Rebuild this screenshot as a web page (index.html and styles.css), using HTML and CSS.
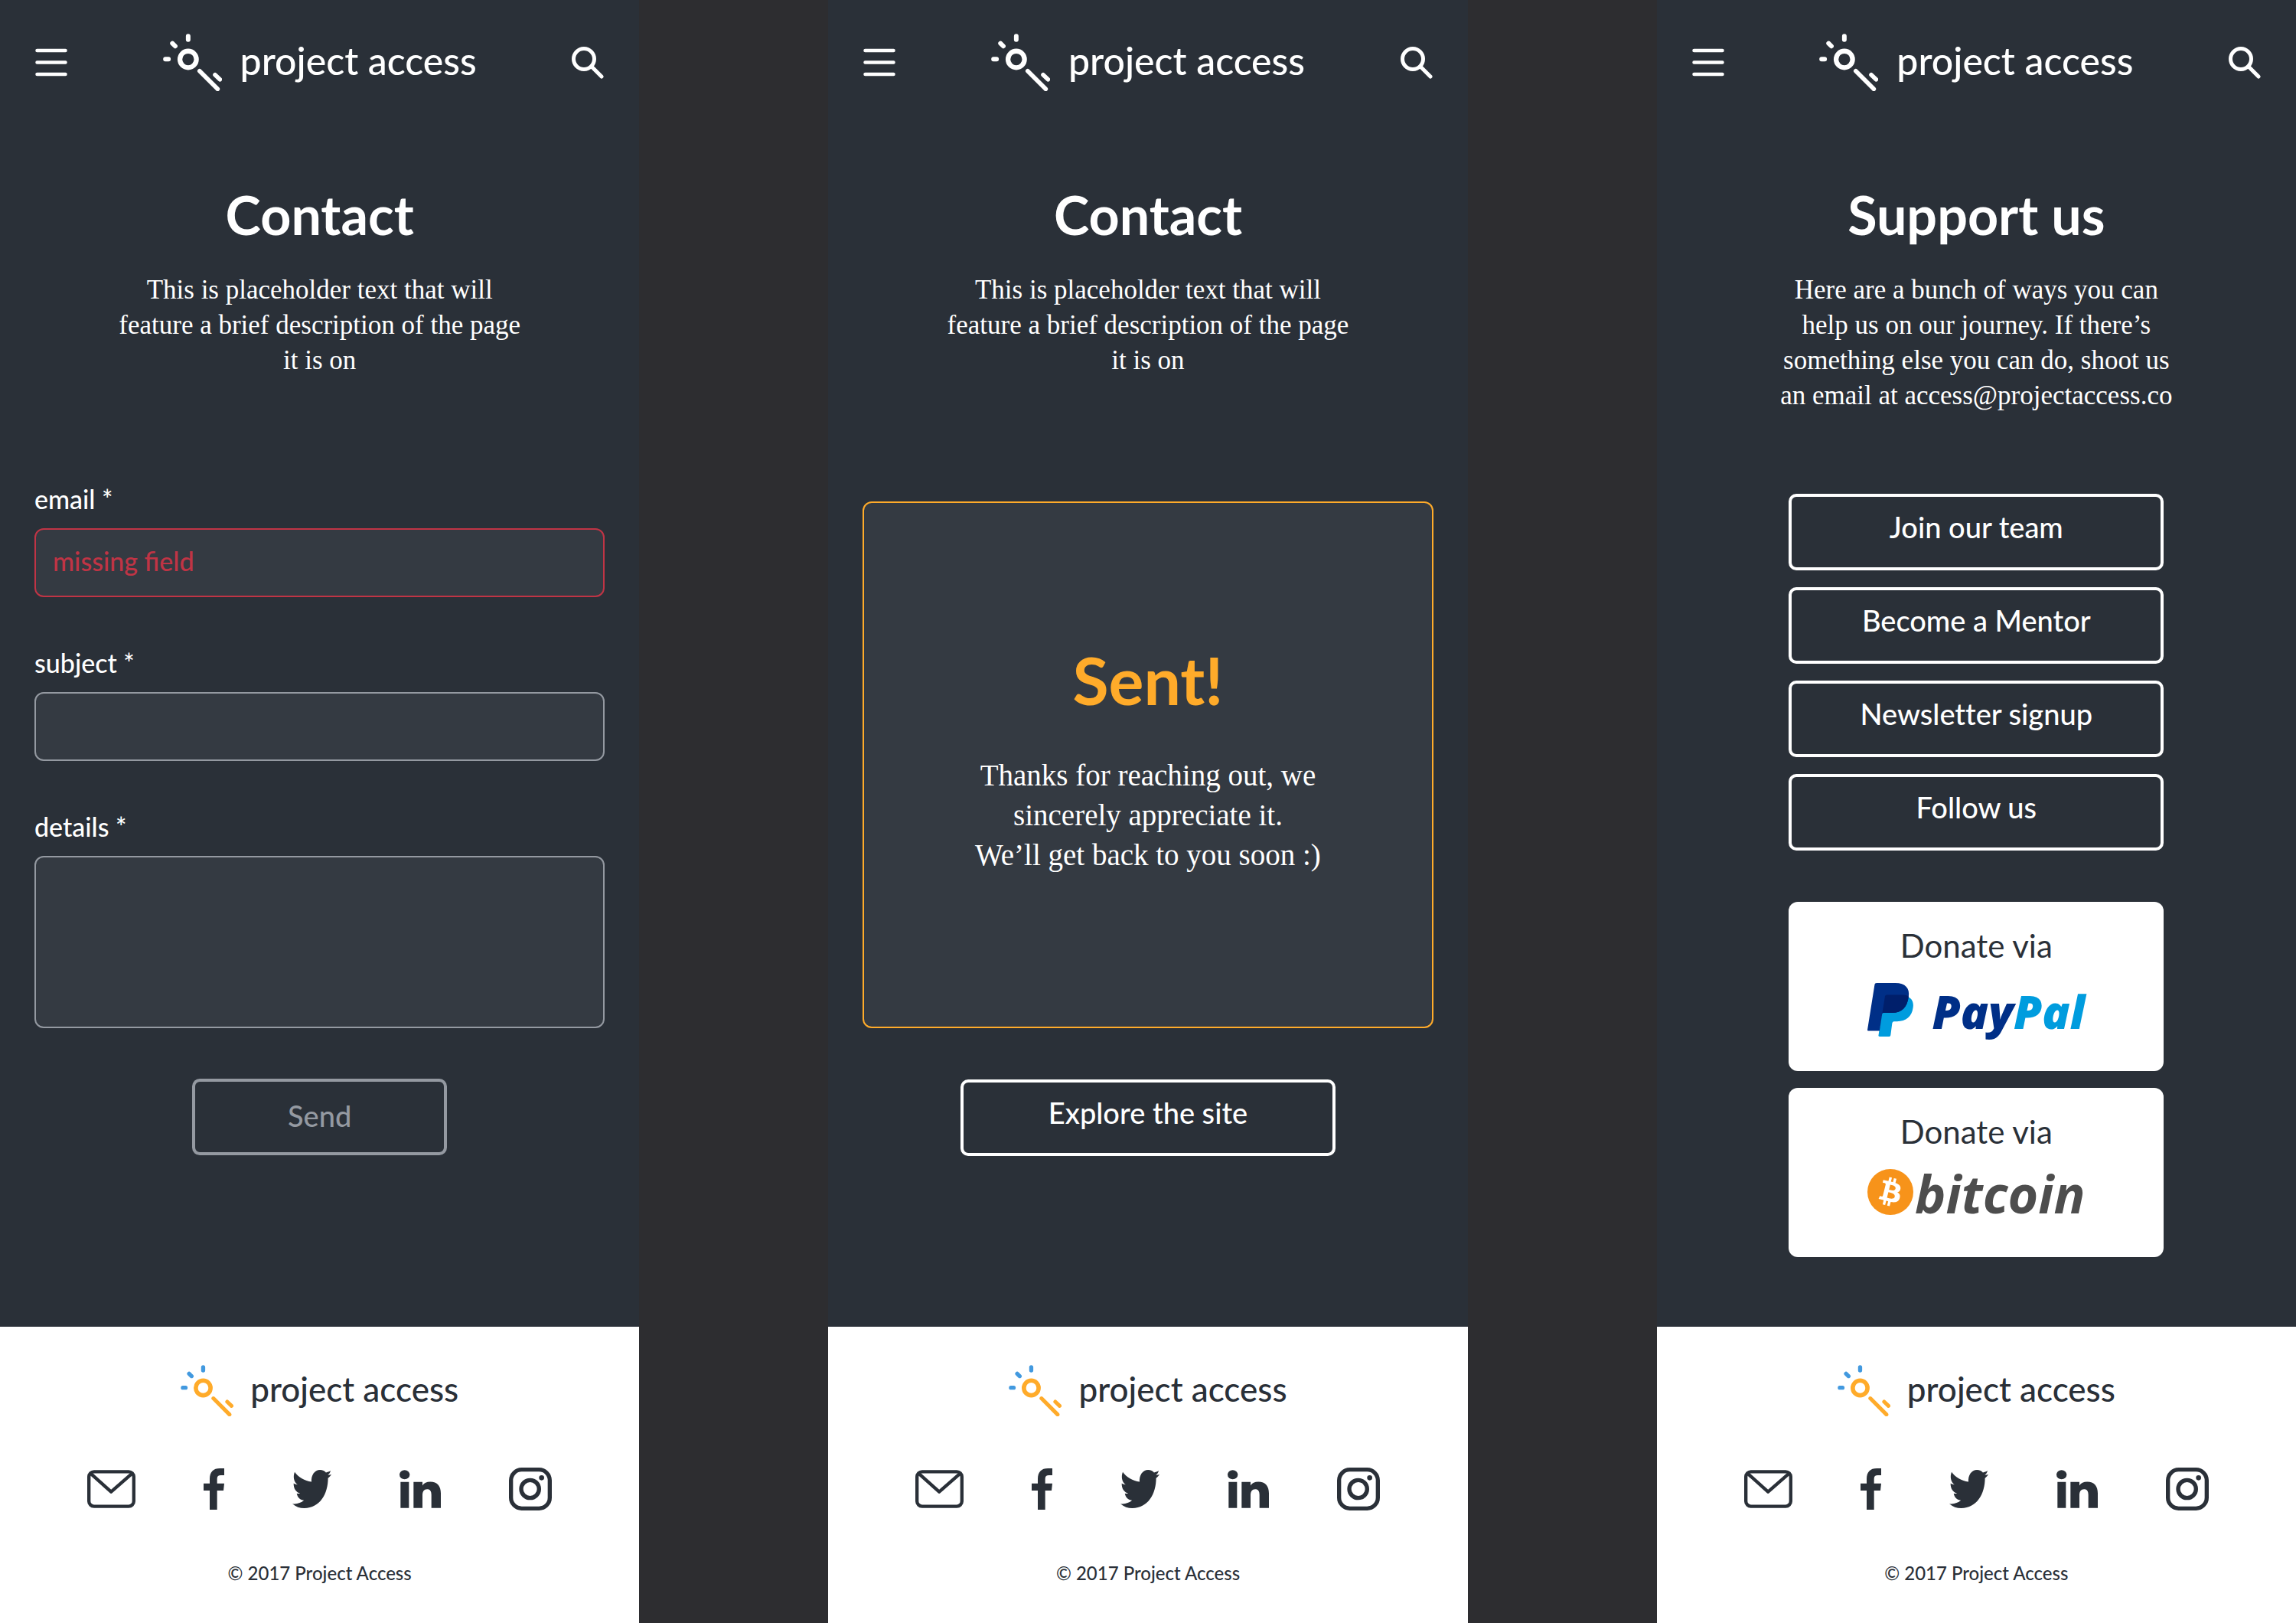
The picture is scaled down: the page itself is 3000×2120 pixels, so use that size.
FILE: index.html
```html
<!DOCTYPE html>
<html lang="en">
<head>
  <meta charset="utf-8">
  <meta name="viewport" content="width=device-width, initial-scale=1">
  <title>Project Access</title>
  <link rel="stylesheet" href="styles.css">
</head>
<body>
  <!-- Shared icons -->
  <svg class="sprite" aria-hidden="true">
    <symbol id="key" viewBox="66 42 232 226">
      <g fill="none" stroke-linecap="round">
        <g class="key-rays" stroke-width="18">
          <path d="M165 51.500V65.500M75.500 142H87.500M103 80L114 91"/>
        </g>
        <g class="key-body" stroke-width="17">
          <circle cx="165" cy="143" r="32.500" stroke-width="19"/>
          <path d="M210 189L281 260M271 204L290 222"/>
        </g>
      </g>
    </symbol>
    <symbol id="menu" viewBox="0 0 42 42">
      <path d="M2.500 5H39.500M2.500 20.500H39.500M2.500 36H39.500" fill="none" stroke="currentColor" stroke-width="4.500" stroke-linecap="round"/>
    </symbol>
    <symbol id="search" viewBox="0 0 42 42">
      <g fill="none" stroke="currentColor" stroke-linecap="round">
        <circle cx="16" cy="16" r="13.500" stroke-width="5"/>
        <path d="M27 27L39 39" stroke-width="5"/>
      </g>
    </symbol>
    <symbol id="mail" viewBox="108 59 188 148">
      <g fill="none" stroke="currentColor" stroke-width="13" stroke-linejoin="round">
        <rect x="114.500" y="65.500" width="175" height="135" rx="20"/>
        <path d="M121 72L201 144L283 72"/>
      </g>
    </symbol>
    <symbol id="facebook" viewBox="562 52 81 162">
      <path fill="currentColor" d="M586 214V139H562V111H586V94C586 66 600 52 626 52H643V79H630C620 79 615 83 615 93V111H643L640 139H615V214Z"/>
    </symbol>
    <symbol id="twitter" viewBox="912 59 151 148">
      <path fill="currentColor" d="M921 67C935 87 960 101 986 105C984 80 998 59 1019 59C1029 59 1037 63 1042 69C1048 68 1054 66 1060 62C1058 70 1054 76 1049 79C1054 79 1059 78 1063 77C1060 82 1055 88 1050 91C1050 150 1020 207 958 207C941 207 925 202 912 190C928 193 945 187 957 177C943 176 932 166 929 150C934 151 938 151 942 150C926 146 916 130 917 111C921 114 927 116 932 116C917 105 914 84 921 67Z"/>
    </symbol>
    <symbol id="linkedin" viewBox="251 58 162 149">
      <g fill="currentColor">
        <ellipse cx="271" cy="76.500" rx="20" ry="18"/>
        <path d="M255 105H288V207H255ZM306 105H341V119C347 109 357 104 372 104C399 104 413 121 413 149V207H376V156C376 141 371 133 359 133C347 133 341 142 341 156V207H306Z"/>
      </g>
    </symbol>
    <symbol id="instagram" viewBox="680 52 168 168">
      <g fill="none" stroke="currentColor" stroke-width="16">
        <rect x="688" y="60" width="152" height="152" rx="42"/>
        <circle cx="763" cy="136" r="35"/>
      </g>
      <circle cx="808" cy="92" r="10" fill="currentColor"/>
    </symbol>
  </svg>

  <div class="screens">
    <section class="screen">
      <header class="topbar">
        <button class="icon-button" type="button" aria-label="Menu"><svg><use href="#menu"/></svg></button>
        <a class="logo" href="#"><svg class="logo-key"><use href="#key"/></svg><span class="logo-name">project access</span></a>
        <button class="icon-button" type="button" aria-label="Search"><svg><use href="#search"/></svg></button>
      </header>
      <main class="content">
        <h1 class="title">Contact</h1>
        <p class="intro">This is placeholder text that will feature a brief description of the page it is on</p>
        <form class="form">
          <div class="field">
            <label for="email">email *</label>
            <input class="input input-error" id="email" type="email" placeholder="missing field">
          </div>
          <div class="field">
            <label for="subject">subject *</label>
            <input class="input" id="subject" type="text">
          </div>
          <div class="field">
            <label for="details">details *</label>
            <textarea class="input input-tall" id="details"></textarea>
          </div>
          <button class="button button-send" type="submit" disabled>Send</button>
        </form>
      </main>
      <footer class="footer">
        <a class="logo logo-small" href="#"><svg class="logo-key"><use href="#key"/></svg><span class="logo-name">project access</span></a>
        <nav class="social" aria-label="Social">
          <a href="#" aria-label="Email"><svg class="i-mail"><use href="#mail"/></svg></a>
          <a href="#" aria-label="Facebook"><svg class="i-facebook"><use href="#facebook"/></svg></a>
          <a href="#" aria-label="Twitter"><svg class="i-twitter"><use href="#twitter"/></svg></a>
          <a href="#" aria-label="LinkedIn"><svg class="i-linkedin"><use href="#linkedin"/></svg></a>
          <a href="#" aria-label="Instagram"><svg class="i-instagram"><use href="#instagram"/></svg></a>
        </nav>
        <p class="copyright">© 2017 Project Access</p>
      </footer>
    </section>

    <section class="screen">
      <header class="topbar">
        <button class="icon-button" type="button" aria-label="Menu"><svg><use href="#menu"/></svg></button>
        <a class="logo" href="#"><svg class="logo-key"><use href="#key"/></svg><span class="logo-name">project access</span></a>
        <button class="icon-button" type="button" aria-label="Search"><svg><use href="#search"/></svg></button>
      </header>
      <main class="content">
        <h1 class="title">Contact</h1>
        <p class="intro">This is placeholder text that will feature a brief description of the page it is on</p>
        <div class="sent">
          <h2 class="sent-title">Sent!</h2>
          <p class="sent-text">Thanks for reaching out, we sincerely appreciate it.<br>We’ll get back to you soon :)</p>
        </div>
        <a class="button button-wide" href="#">Explore the site</a>
      </main>
      <footer class="footer">
        <a class="logo logo-small" href="#"><svg class="logo-key"><use href="#key"/></svg><span class="logo-name">project access</span></a>
        <nav class="social" aria-label="Social">
          <a href="#" aria-label="Email"><svg class="i-mail"><use href="#mail"/></svg></a>
          <a href="#" aria-label="Facebook"><svg class="i-facebook"><use href="#facebook"/></svg></a>
          <a href="#" aria-label="Twitter"><svg class="i-twitter"><use href="#twitter"/></svg></a>
          <a href="#" aria-label="LinkedIn"><svg class="i-linkedin"><use href="#linkedin"/></svg></a>
          <a href="#" aria-label="Instagram"><svg class="i-instagram"><use href="#instagram"/></svg></a>
        </nav>
        <p class="copyright">© 2017 Project Access</p>
      </footer>
    </section>

    <section class="screen">
      <header class="topbar">
        <button class="icon-button" type="button" aria-label="Menu"><svg><use href="#menu"/></svg></button>
        <a class="logo" href="#"><svg class="logo-key"><use href="#key"/></svg><span class="logo-name">project access</span></a>
        <button class="icon-button" type="button" aria-label="Search"><svg><use href="#search"/></svg></button>
      </header>
      <main class="content">
        <h1 class="title">Support us</h1>
        <p class="intro">Here are a bunch of ways you can help us on our journey. If there’s something else you can do, shoot us an email at access@projectaccess.co</p>
        <div class="actions">
          <a class="button button-wide" href="#">Join our team</a>
          <a class="button button-wide" href="#">Become a Mentor</a>
          <a class="button button-wide" href="#">Newsletter signup</a>
          <a class="button button-wide" href="#">Follow us</a>
        </div>
        <div class="donations">
          <a class="donate" href="#">
            <span>Donate via</span>
            <span class="brand paypal">
              <svg class="paypal-mark" viewBox="360 374 178 208" aria-hidden="true">
                <path fill="#009cde" d="M519 428C534 436 540 450 537 470C532 505 510 523 475 523H463C459 523 457 526 456 530L450 576C449 580 447 582 443 582H407C404 582 402 580 403 577L407 550L417 480Z"/>
                <path fill="#002f87" d="M388 380C389 376 391 374 396 374H468C508 374 525 395 520 427C514 470 494 490 455 490H424C420 490 418 491 417 494L407 560H364C361 560 360 558 360 555Z"/>
                <path fill="#001f6b" d="M428 426C429 422 431 420 436 420H500C508 420 514 422 520 427C514 470 494 490 455 490H424C420 490 418 491 417 494Z"/>
              </svg>
              <span>Pay<span class="paypal-light">Pal</span></span>
            </span>
          </a>
          <a class="donate" href="#">
            <span>Donate via</span>
            <span class="brand bitcoin">
              <svg class="bitcoin-mark" viewBox="0 0 64 64" aria-hidden="true">
                <circle cx="32" cy="32" r="32" fill="#f7931a"/>
                <path fill="#fff" d="M46.110 27.441c.636-4.258-2.606-6.547-7.039-8.074l1.438-5.768-3.512-.875-1.400 5.616c-.922-.230-1.870-.447-2.812-.662l1.410-5.653-3.509-.875-1.439 5.766c-.764-.174-1.514-.346-2.242-.527l.004-.018-4.842-1.209-.934 3.750s2.605.597 2.550.634c1.422.355 1.680 1.296 1.636 2.042l-1.638 6.571c.098.025.225.061.365.117l-.370-.092-2.297 9.205c-.174.432-.615 1.080-1.609.834.035.051-2.552-.637-2.552-.637l-1.743 4.020 4.570 1.139c.850.213 1.683.436 2.502.646l-1.453 5.835 3.507.875 1.440-5.772c.957.260 1.887.500 2.797.726L27.504 50.800l3.511.875 1.453-5.823c5.987 1.133 10.490.676 12.383-4.738 1.527-4.360-.075-6.875-3.225-8.516 2.294-.531 4.022-2.040 4.483-5.157zM38.087 38.690c-1.086 4.360-8.426 2.004-10.807 1.412l1.928-7.729c2.380.594 10.011 1.770 8.880 6.317zm1.085-11.312c-.990 3.966-7.100 1.951-9.083 1.457l1.748-7.010c1.983.494 8.367 1.416 7.335 5.553z"/>
              </svg>
              <span>bitcoin</span>
            </span>
          </a>
        </div>
      </main>
      <footer class="footer">
        <a class="logo logo-small" href="#"><svg class="logo-key"><use href="#key"/></svg><span class="logo-name">project access</span></a>
        <nav class="social" aria-label="Social">
          <a href="#" aria-label="Email"><svg class="i-mail"><use href="#mail"/></svg></a>
          <a href="#" aria-label="Facebook"><svg class="i-facebook"><use href="#facebook"/></svg></a>
          <a href="#" aria-label="Twitter"><svg class="i-twitter"><use href="#twitter"/></svg></a>
          <a href="#" aria-label="LinkedIn"><svg class="i-linkedin"><use href="#linkedin"/></svg></a>
          <a href="#" aria-label="Instagram"><svg class="i-instagram"><use href="#instagram"/></svg></a>
        </nav>
        <p class="copyright">© 2017 Project Access</p>
      </footer>
    </section>
  </div>
</body>
</html>
```
FILE: styles.css
```css
:root {
  --ink: #2a3038;
  --panel: #343a42;
  --muted: #9499a1;
  --orange: #ffab2a;
  --blue: #4299df;
  --red: #c03445;
}

* {
  box-sizing: border-box;
}

body {
  margin: 0;
  background: #2d2d30;
  color: #fff;
  font-family: Lato, "Open Sans", sans-serif;
  font-weight: 500;
}

h1, h2, p {
  margin: 0;
}

a {
  color: inherit;
  text-decoration: none;
}

svg {
  display: block;
}

.sprite {
  display: none;
}

.screens {
  display: grid;
  grid-template-columns: repeat(3, 1fr);
  column-gap: 247px;
  min-height: 100vh;
}

.screen {
  display: flex;
  flex-direction: column;
  background: var(--ink);
}

/* Top bar */

.topbar {
  display: flex;
  align-items: center;
  justify-content: space-between;
  padding: 44px 46px;
}

.icon-button {
  padding: 0;
  border: 0;
  background: none;
  color: inherit;
}

.icon-button svg {
  width: 42px;
  height: 42px;
}

.logo {
  display: flex;
  align-items: center;
  gap: 24px;
  font-size: 50px;
  line-height: 60px;
}

.logo-key {
  width: 77px;
  height: 75px;
}

.logo-name {
  padding-bottom: 6px;
}

.key-rays {
  stroke: var(--rays, #fff);
}

.key-body {
  stroke: var(--key, #fff);
}

/* Page content */

.content {
  flex: 1;
  display: flex;
  flex-direction: column;
  align-items: center;
  padding: 75px 45px 91px;
}

.title {
  font-size: 70px;
  font-weight: 700;
  line-height: 84px;
}

.intro {
  max-width: 530px;
  margin-top: 34px;
  font-family: "Liberation Serif", serif;
  font-size: 35px;
  font-weight: 400;
  line-height: 46px;
  text-align: center;
}

/* Form */

.form {
  display: flex;
  flex-direction: column;
  gap: 66px;
  width: 100%;
  margin-top: 138px;
}

.field {
  display: flex;
  flex-direction: column;
  gap: 18px;
  font-size: 34px;
  line-height: 40px;
}

.input {
  height: 90px;
  padding: 0 22px 6px;
  border: 2px solid var(--muted);
  border-radius: 12px;
  background: var(--panel);
  color: #fff;
  font: inherit;
}

.input-tall {
  height: 225px;
  padding: 20px 22px;
  resize: none;
}

.input-error {
  border-color: var(--red);
}

.input::placeholder {
  color: var(--red);
  opacity: 1;
}

/* Buttons */

.button {
  display: flex;
  align-items: center;
  justify-content: center;
  height: 100px;
  padding: 0 20px 14px;
  border: 4px solid currentColor;
  border-radius: 10px;
  background: none;
  color: #fff;
  font: 500 38px/46px Lato, "Open Sans", sans-serif;
  font-variant-ligatures: none;
}

.button-wide {
  width: 490px;
  max-width: 100%;
}

.button-send {
  align-self: center;
  width: 333px;
  padding-bottom: 4px;
  color: var(--muted);
}

/* Confirmation */

.sent {
  display: flex;
  flex-direction: column;
  align-items: center;
  gap: 47px;
  width: 100%;
  margin: 161px 0 67px;
  padding: 179px 20px 198px;
  border: 2px solid var(--orange);
  border-radius: 12px;
  background: var(--panel);
}

.sent-title {
  color: var(--orange);
  font-size: 86px;
  font-weight: 700;
  line-height: 104px;
}

.sent-text {
  max-width: 480px;
  font-family: "Liberation Serif", serif;
  font-size: 39px;
  font-weight: 400;
  line-height: 52px;
  text-align: center;
}

/* Support */

.actions,
.donations {
  display: flex;
  flex-direction: column;
  gap: 22px;
}

.actions {
  margin: 105px 0 67px;
}

.donate {
  display: flex;
  flex-direction: column;
  align-items: center;
  gap: 24px;
  width: 490px;
  height: 221px;
  padding-top: 32px;
  border-radius: 12px;
  background: #fff;
  color: var(--ink);
  font-size: 42px;
  font-weight: 400;
  line-height: 50px;
}

.brand {
  display: flex;
  align-items: flex-start;
  font-family: "Open Sans", sans-serif;
  font-style: italic;
}

.paypal {
  gap: 24px;
  color: #002f87;
  font-size: 60px;
  font-weight: 800;
  line-height: 74px;
}

.paypal-light {
  color: #009cde;
}

.paypal-mark {
  width: 60px;
  height: 70px;
}

.bitcoin {
  gap: 2px;
  color: #4d4d4d;
  font-size: 68px;
  font-weight: 700;
  line-height: 64px;
}

.bitcoin-mark {
  width: 60px;
  height: 60px;
}

/* Footer */

.footer {
  --rays: var(--blue);
  --key: var(--orange);
  display: flex;
  flex-direction: column;
  align-items: center;
  gap: 67px;
  padding: 50px 20px;
  background: #fff;
  color: var(--ink);
}

.logo-small {
  gap: 22px;
  font-size: 44px;
  line-height: 54px;
}

.logo-small .logo-key {
  width: 69px;
  height: 67px;
}

.social {
  display: flex;
  align-items: center;
  gap: 89px;
}

.i-mail {
  width: 63px;
  height: 50px;
}

.i-facebook {
  width: 27px;
  height: 54px;
}

.i-twitter {
  width: 51px;
  height: 50px;
}

.i-linkedin {
  width: 54px;
  height: 50px;
}

.i-instagram {
  width: 56px;
  height: 56px;
}

.copyright {
  font-size: 24px;
  line-height: 30px;
}
```
